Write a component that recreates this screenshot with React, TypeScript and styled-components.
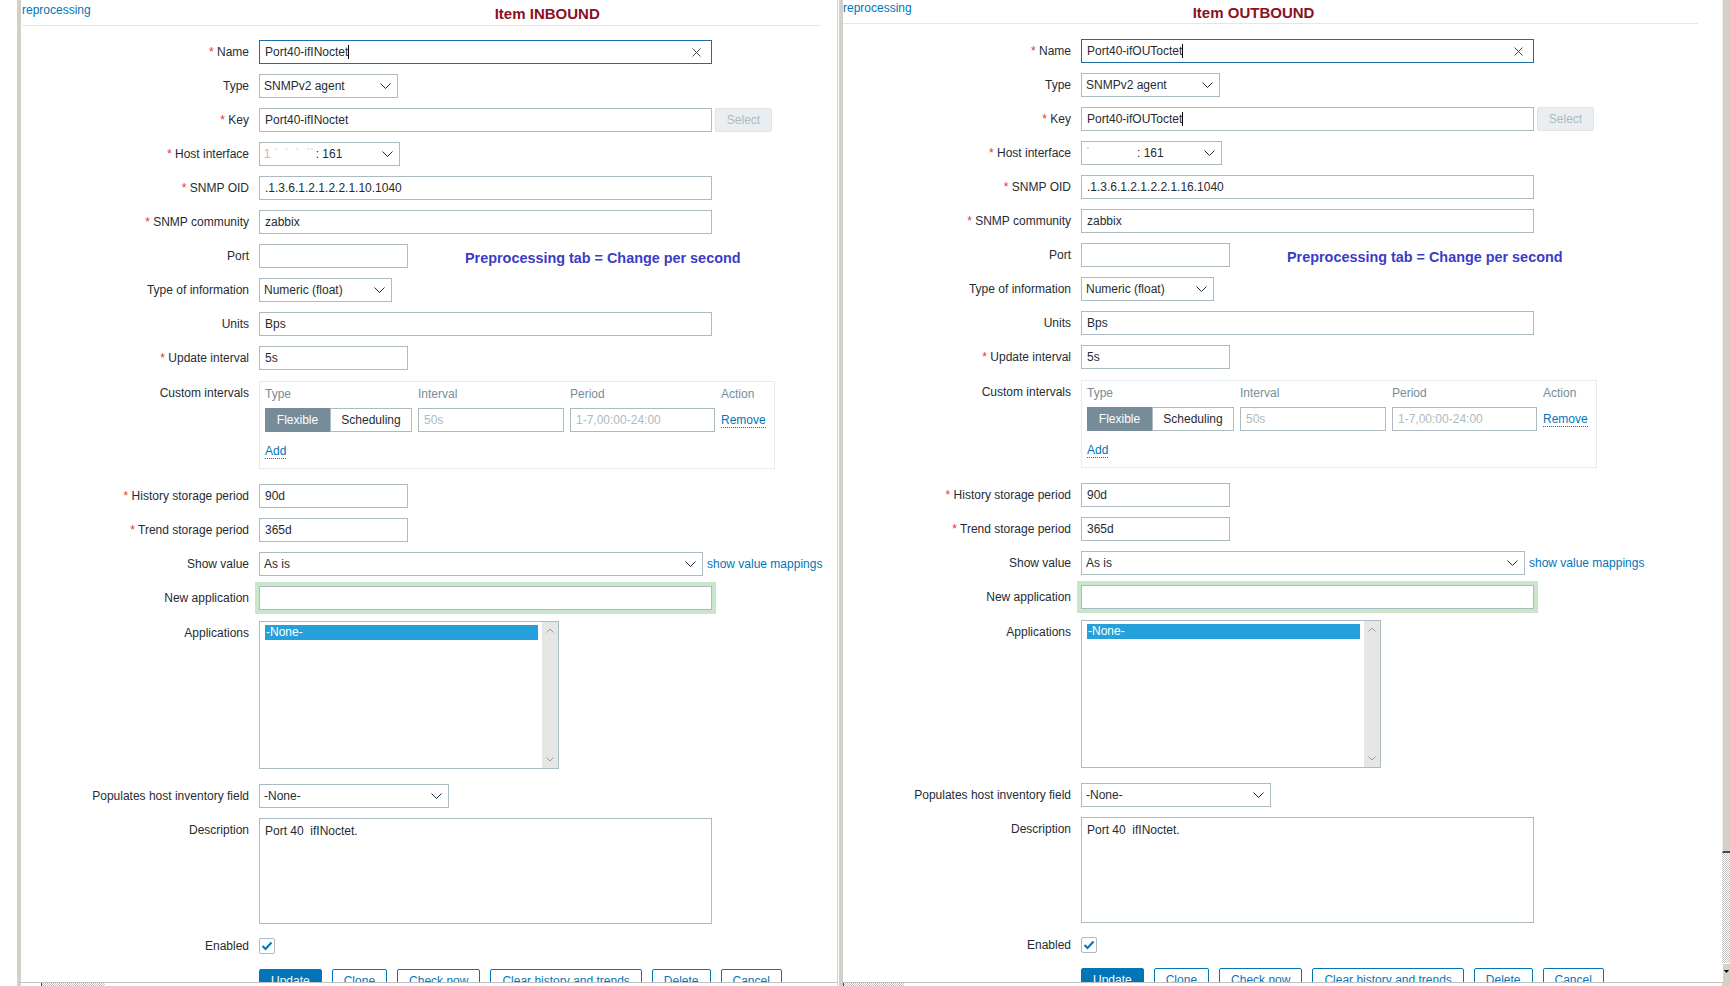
import React from "react";
import styled, { createGlobalStyle, css } from "styled-components";

const GlobalStyle = createGlobalStyle`
  html, body { margin: 0; padding: 0; background: #ffffff; }
  body {
    font-family: "Liberation Sans", Arial, Helvetica, sans-serif;
    font-size: 12px;
    color: #1f2c33;
  }
  * { box-sizing: border-box; }
`;

const checker = css`
  background-color: #ffffff;
  background-image: repeating-conic-gradient(#c4c4c4 0% 25%, #ffffff 0% 50%);
  background-size: 2px 2px;
`;

const Screen = styled.div`
  display: flex;
  width: 1730px;
  height: 986px;
  overflow: hidden;
  background: #ffffff;
`;

const Gutter = styled.div`
  flex: none;
  width: 17px;
`;

const Window = styled.div<{ $w?: number; $edge?: boolean }>`
  flex: ${(p) => (p.$w ? "none" : "1")};
  width: ${(p) => (p.$w ? `${p.$w}px` : "auto")};
  min-width: 0;
  display: flex;
  flex-direction: column;
  border-left: 4px solid #d4d0c8;
  border-right: ${(p) => (p.$edge ? "1px solid #d4d0c8" : "none")};
  margin-right: ${(p) => (p.$edge ? "1px" : "0")};
`;

const WindowBody = styled.div`
  flex: 1;
  min-height: 0;
  overflow: hidden;
`;

const HScroll = styled.div`
  flex: none;
  height: 4px;
  border-top: 1px solid #c2c2c2;
  display: flex;
`;

const HGrip = styled.div<{ $ml: number; $w: number }>`
  margin-left: ${(p) => p.$ml}px;
  width: ${(p) => p.$w}px;
  border-left: 1px solid #404040;
  ${checker}
`;

const VScroll = styled.div`
  flex: none;
  width: 8px;
  display: flex;
  flex-direction: column;
`;

const VThumb = styled.div`
  height: 853px;
  background: #d4d0c8;
  border-left: 1px solid #f2f0ec;
  border-bottom: 2px solid #4a4a4a;
`;

const VTrack = styled.div`
  flex: 1;
  ${checker}
`;

const VButton = styled.div`
  height: 19px;
  background: #d4d0c8;
  border-top: 1px solid #ffffff;
  border-left: 1px solid #ffffff;
  display: flex;
  align-items: flex-start;
  justify-content: center;
  padding-top: 6px;
`;

const VCorner = styled.div`
  height: 4px;
  background: #d4d0c8;
`;

const Header = styled.div<{ $h: number; $mr: number; $ml: number }>`
  display: flex;
  align-items: flex-start;
  height: ${(p) => p.$h + 1}px;
  margin-left: ${(p) => p.$ml}px;
  margin-right: ${(p) => p.$mr}px;
  border-bottom: 1px solid #e6e6e6;
`;

const TabLink = styled.span<{ $mt: number }>`
  margin-top: ${(p) => p.$mt}px;
  line-height: 16px;
  color: #0275b8;
  white-space: nowrap;
`;

const Title = styled.span<{ $ml: number; $mt: number }>`
  margin-left: ${(p) => p.$ml}px;
  margin-top: ${(p) => p.$mt}px;
  font-family: "Liberation Sans", Arial, sans-serif;
  font-weight: 700;
  font-size: 15px;
  line-height: 18px;
  color: #8a1022;
  white-space: nowrap;
`;

const Form = styled.div<{ $pt: number }>`
  padding-top: ${(p) => p.$pt}px;
  display: flex;
  flex-direction: column;
`;

const Row = styled.div<{ $mt?: number }>`
  display: grid;
  grid-template-columns: 228px 1fr;
  column-gap: 10px;
  margin-top: ${(p) => (p.$mt === undefined ? 10 : p.$mt)}px;
`;

const Label = styled.div`
  text-align: right;
  line-height: 24px;
  white-space: nowrap;
  color: #1f2c33;
`;

const Req = styled.span`
  color: #e33734;
`;

const Control = styled.div`
  display: flex;
  align-items: center;
  min-height: 24px;
  min-width: 0;
`;

const Field = styled.div<{ $w: number; $focus?: boolean; $muted?: boolean }>`
  flex: none;
  width: ${(p) => p.$w}px;
  height: 24px;
  border: 1px solid ${(p) => (p.$focus ? "#1d6ca6" : "#acbbc2")};
  background: #ffffff;
  padding: 0 5px;
  display: flex;
  align-items: center;
  line-height: 22px;
  white-space: pre;
  overflow: hidden;
  color: ${(p) => (p.$muted ? "#acbbc2" : "#1f2c33")};
`;

const Halo = styled(Field)`
  box-shadow: 0 0 0 4px #c9e6cb;
`;

const Fill = styled.span`
  flex: 1;
`;

const Caret = styled.span`
  display: inline-block;
  width: 1px;
  height: 14px;
  background: #000000;
`;

const HostValue = styled.span`
  display: flex;
  align-items: center;
  line-height: 22px;
  white-space: pre;
`;

const Faint = styled.span<{ $c: string; $w?: number }>`
  flex: none;
  color: ${(p) => p.$c};
  width: ${(p) => (p.$w ? `${p.$w}px` : "auto")};
  overflow: hidden;
  white-space: pre;
`;

const SelectBox = styled.div<{ $w: number }>`
  flex: none;
  width: ${(p) => p.$w}px;
  height: 24px;
  border: 1px solid #acbbc2;
  background: #ffffff;
  padding: 0 6px 0 4px;
  display: flex;
  align-items: center;
  justify-content: space-between;
  white-space: pre;
  color: #1f2c33;
`;

const GhostButton = styled.div`
  flex: none;
  margin-left: 3px;
  width: 57px;
  height: 24px;
  line-height: 22px;
  text-align: center;
  background: #ebeef0;
  border: 1px solid #dfe4e7;
  border-radius: 2px;
  color: #acbbc2;
`;

const Note = styled.span`
  margin-left: 57px;
  padding-top: 4px;
  font-family: "Liberation Sans", Arial, sans-serif;
  font-weight: 700;
  font-size: 14.4px;
  color: #3b3cc6;
  white-space: nowrap;
`;

const TextLink = styled.span<{ $ml?: number }>`
  margin-left: ${(p) => p.$ml || 0}px;
  color: #0275b8;
  white-space: nowrap;
`;

const DottedLink = styled.span`
  display: inline-block;
  line-height: 14px;
  color: #0275b8;
  border-bottom: 1px dotted #0275b8;
  white-space: nowrap;
`;

const IntervalsBox = styled.div`
  width: 516px;
  border: 1px solid #e6eaec;
  padding: 4px 5px 9px 5px;
  display: flex;
  flex-direction: column;
  align-items: flex-start;
`;

const IntervalGrid = styled.div`
  display: grid;
  grid-template-columns: 147px 146px 145px auto;
  column-gap: 6px;
  row-gap: 6px;
  align-items: center;
`;

const ColHead = styled.div`
  line-height: 16px;
  color: #768d99;
`;

const Segmented = styled.div`
  display: flex;
  height: 24px;
`;

const Segment = styled.div<{ $on?: boolean; $w: number }>`
  width: ${(p) => p.$w}px;
  height: 24px;
  line-height: 22px;
  text-align: center;
  border: 1px solid ${(p) => (p.$on ? "#768d99" : "#acbbc2")};
  background: ${(p) => (p.$on ? "#768d99" : "#ffffff")};
  color: ${(p) => (p.$on ? "#ffffff" : "#1f2c33")};
`;

const AddRow = styled.div`
  margin-top: 12px;
`;

const ListBox = styled.div`
  width: 300px;
  height: 148px;
  border: 1px solid #acbbc2;
  display: flex;
  background: #ffffff;
`;

const ListOptions = styled.div`
  flex: 1;
  padding: 3px 4px 0 5px;
`;

const Option = styled.div`
  height: 15px;
  line-height: 15px;
  padding-left: 1px;
  background: #26a0da;
  color: #ffffff;
`;

const ListScroll = styled.div`
  width: 16px;
  background: #e6e6e6;
  display: flex;
  flex-direction: column;
  justify-content: space-between;
  align-items: center;
  padding: 6px 0 6px 0;
`;

const TextArea = styled.div`
  width: 453px;
  height: 106px;
  border: 1px solid #acbbc2;
  padding: 5px 5px;
  line-height: 14px;
  white-space: pre;
  color: #1f2c33;
`;

const CheckBox = styled.div`
  width: 16px;
  height: 16px;
  border: 1px solid #acbbc2;
  border-radius: 2px;
  background: #ffffff;
  display: flex;
  align-items: center;
  justify-content: center;
`;

const Buttons = styled.div`
  display: flex;
  gap: 10px;
`;

const Button = styled.div<{ $primary?: boolean }>`
  height: 24px;
  line-height: 22px;
  padding: 0 11px;
  border: 1px solid #0275b8;
  border-radius: 2px;
  background: ${(p) => (p.$primary ? "#0275b8" : "#ffffff")};
  color: ${(p) => (p.$primary ? "#ffffff" : "#0275b8")};
  white-space: nowrap;
`;

const Chevron = () => (
  <svg width="11" height="6" viewBox="0 0 11 6">
    <polyline points="0.5,0.5 5.5,5.5 10.5,0.5" fill="none" stroke="#1f2c33" strokeWidth="1" />
  </svg>
);

const SmallArrow = ({ up }: { up?: boolean }) => (
  <svg width="8" height="5" viewBox="0 0 8 5">
    <polyline
      points={up ? "0.5,4.5 4,1 7.5,4.5" : "0.5,0.5 4,4 7.5,0.5"}
      fill="none"
      stroke="#9a9a9a"
      strokeWidth="1"
    />
  </svg>
);

const ClearIcon = () => (
  <svg width="9" height="9" viewBox="0 0 9 9" style={{ marginRight: 5 }}>
    <path d="M0.5 0.5 L8.5 8.5 M8.5 0.5 L0.5 8.5" stroke="#3d4a52" strokeWidth="1" fill="none" />
  </svg>
);

const CheckMark = () => (
  <svg width="12" height="10" viewBox="0 0 12 10">
    <polyline points="1.5,5 4.5,8 10.5,1.5" fill="none" stroke="#0275b8" strokeWidth="2" />
  </svg>
);

const DownTriangle = () => (
  <svg width="5" height="3" viewBox="0 0 5 3">
    <polygon points="0,0 5,0 2.5,3" fill="#000000" />
  </svg>
);

type PanelData = {
  headerH: number;
  formTop: number;
  lineStart: number;
  lineTrim: number;
  tabTop: number;
  title: string;
  titleOffset: number;
  titleTop: number;
  name: string;
  oid: string;
  keyCaret: boolean;
  hostLead: string;
  hostLeadColor: string;
  hostFaint: string;
  hostFaintW: number;
};

const panels: PanelData[] = [
  {
    headerH: 25,
    formTop: 14,
    lineStart: 1,
    lineTrim: 16,
    tabTop: 2,
    title: "Item INBOUND",
    titleOffset: 404,
    titleTop: 5,
    name: "Port40-ifINoctet",
    oid: ".1.3.6.1.2.1.2.2.1.10.1040",
    keyCaret: false,
    hostLead: "1",
    hostLeadColor: "#f0b272",
    hostFaint: " `  `  `  ``",
    hostFaintW: 45,
  },
  {
    headerH: 23,
    formTop: 15,
    lineStart: 0,
    lineTrim: 24,
    tabTop: 0,
    title: "Item OUTBOUND",
    titleOffset: 281,
    titleTop: 4,
    name: "Port40-ifOUToctet",
    oid: ".1.3.6.1.2.1.2.2.1.16.1040",
    keyCaret: true,
    hostLead: "`",
    hostLeadColor: "#b9c0c6",
    hostFaint: "",
    hostFaintW: 47,
  },
];

function Panel({ d }: { d: PanelData }) {
  return (
    <>
      <Header $h={d.headerH} $ml={d.lineStart} $mr={d.lineTrim}>
        <TabLink $mt={d.tabTop}>reprocessing</TabLink>
        <Title $ml={d.titleOffset} $mt={d.titleTop}>
          {d.title}
        </Title>
      </Header>
      <Form $pt={d.formTop}>
        <Row $mt={0}>
          <Label>
            <Req>*</Req> Name
          </Label>
          <Control>
            <Field $w={453} $focus>
              {d.name}
              <Caret />
              <Fill />
              <ClearIcon />
            </Field>
          </Control>
        </Row>
        <Row>
          <Label>Type</Label>
          <Control>
            <SelectBox $w={139}>
              SNMPv2 agent
              <Chevron />
            </SelectBox>
          </Control>
        </Row>
        <Row>
          <Label>
            <Req>*</Req> Key
          </Label>
          <Control>
            <Field $w={453}>
              {d.name}
              {d.keyCaret && <Caret />}
            </Field>
            <GhostButton>Select</GhostButton>
          </Control>
        </Row>
        <Row>
          <Label>
            <Req>*</Req> Host interface
          </Label>
          <Control>
            <SelectBox $w={141}>
              <HostValue>
                <Faint $c={d.hostLeadColor}>{d.hostLead}</Faint>
                <Faint $c="#cfd5da" $w={d.hostFaintW}>
                  {d.hostFaint}
                </Faint>
                : 161
              </HostValue>
              <Chevron />
            </SelectBox>
          </Control>
        </Row>
        <Row>
          <Label>
            <Req>*</Req> SNMP OID
          </Label>
          <Control>
            <Field $w={453}>{d.oid}</Field>
          </Control>
        </Row>
        <Row>
          <Label>
            <Req>*</Req> SNMP community
          </Label>
          <Control>
            <Field $w={453}>zabbix</Field>
          </Control>
        </Row>
        <Row>
          <Label>Port</Label>
          <Control>
            <Field $w={149} />
            <Note>Preprocessing tab = Change per second</Note>
          </Control>
        </Row>
        <Row>
          <Label>Type of information</Label>
          <Control>
            <SelectBox $w={133}>
              Numeric (float)
              <Chevron />
            </SelectBox>
          </Control>
        </Row>
        <Row>
          <Label>Units</Label>
          <Control>
            <Field $w={453}>Bps</Field>
          </Control>
        </Row>
        <Row>
          <Label>
            <Req>*</Req> Update interval
          </Label>
          <Control>
            <Field $w={149}>5s</Field>
          </Control>
        </Row>
        <Row $mt={11}>
          <Label>Custom intervals</Label>
          <div>
            <IntervalsBox>
              <IntervalGrid>
                <ColHead>Type</ColHead>
                <ColHead>Interval</ColHead>
                <ColHead>Period</ColHead>
                <ColHead>Action</ColHead>
                <Segmented>
                  <Segment $on $w={65}>
                    Flexible
                  </Segment>
                  <Segment $w={82}>Scheduling</Segment>
                </Segmented>
                <Field $w={146} $muted>
                  50s
                </Field>
                <Field $w={145} $muted>
                  1-7,00:00-24:00
                </Field>
                <div>
                  <DottedLink>Remove</DottedLink>
                </div>
              </IntervalGrid>
              <AddRow>
                <DottedLink>Add</DottedLink>
              </AddRow>
            </IntervalsBox>
          </div>
        </Row>
        <Row $mt={15}>
          <Label>
            <Req>*</Req> History storage period
          </Label>
          <Control>
            <Field $w={149}>90d</Field>
          </Control>
        </Row>
        <Row>
          <Label>
            <Req>*</Req> Trend storage period
          </Label>
          <Control>
            <Field $w={149}>365d</Field>
          </Control>
        </Row>
        <Row>
          <Label>Show value</Label>
          <Control>
            <SelectBox $w={444}>
              As is
              <Chevron />
            </SelectBox>
            <TextLink $ml={4}>show value mappings</TextLink>
          </Control>
        </Row>
        <Row>
          <Label>New application</Label>
          <Control>
            <Halo $w={453} />
          </Control>
        </Row>
        <Row $mt={11}>
          <Label>Applications</Label>
          <div>
            <ListBox>
              <ListOptions>
                <Option>-None-</Option>
              </ListOptions>
              <ListScroll>
                <SmallArrow up />
                <SmallArrow />
              </ListScroll>
            </ListBox>
          </div>
        </Row>
        <Row $mt={15}>
          <Label>Populates host inventory field</Label>
          <Control>
            <SelectBox $w={190}>
              -None-
              <Chevron />
            </SelectBox>
          </Control>
        </Row>
        <Row>
          <Label>Description</Label>
          <div>
            <TextArea>Port 40  ifINoctet.</TextArea>
          </div>
        </Row>
        <Row>
          <Label>Enabled</Label>
          <Control>
            <CheckBox>
              <CheckMark />
            </CheckBox>
          </Control>
        </Row>
        <Row $mt={11}>
          <div />
          <Buttons>
            <Button $primary>Update</Button>
            <Button>Clone</Button>
            <Button>Check now</Button>
            <Button>Clear history and trends</Button>
            <Button>Delete</Button>
            <Button>Cancel</Button>
          </Buttons>
        </Row>
      </Form>
    </>
  );
}

export default function App() {
  return (
    <>
      <GlobalStyle />
      <Screen>
        <Gutter />
        <Window $w={821} $edge>
          <WindowBody>
            <Panel d={panels[0]} />
          </WindowBody>
          <HScroll>
            <HGrip $ml={20} $w={64} />
          </HScroll>
        </Window>
        <Window>
          <WindowBody>
            <Panel d={panels[1]} />
          </WindowBody>
          <HScroll>
            <HGrip $ml={0} $w={61} />
          </HScroll>
        </Window>
        <VScroll>
          <VThumb />
          <VTrack />
          <VButton>
            <DownTriangle />
          </VButton>
          <VCorner />
        </VScroll>
      </Screen>
    </>
  );
}
